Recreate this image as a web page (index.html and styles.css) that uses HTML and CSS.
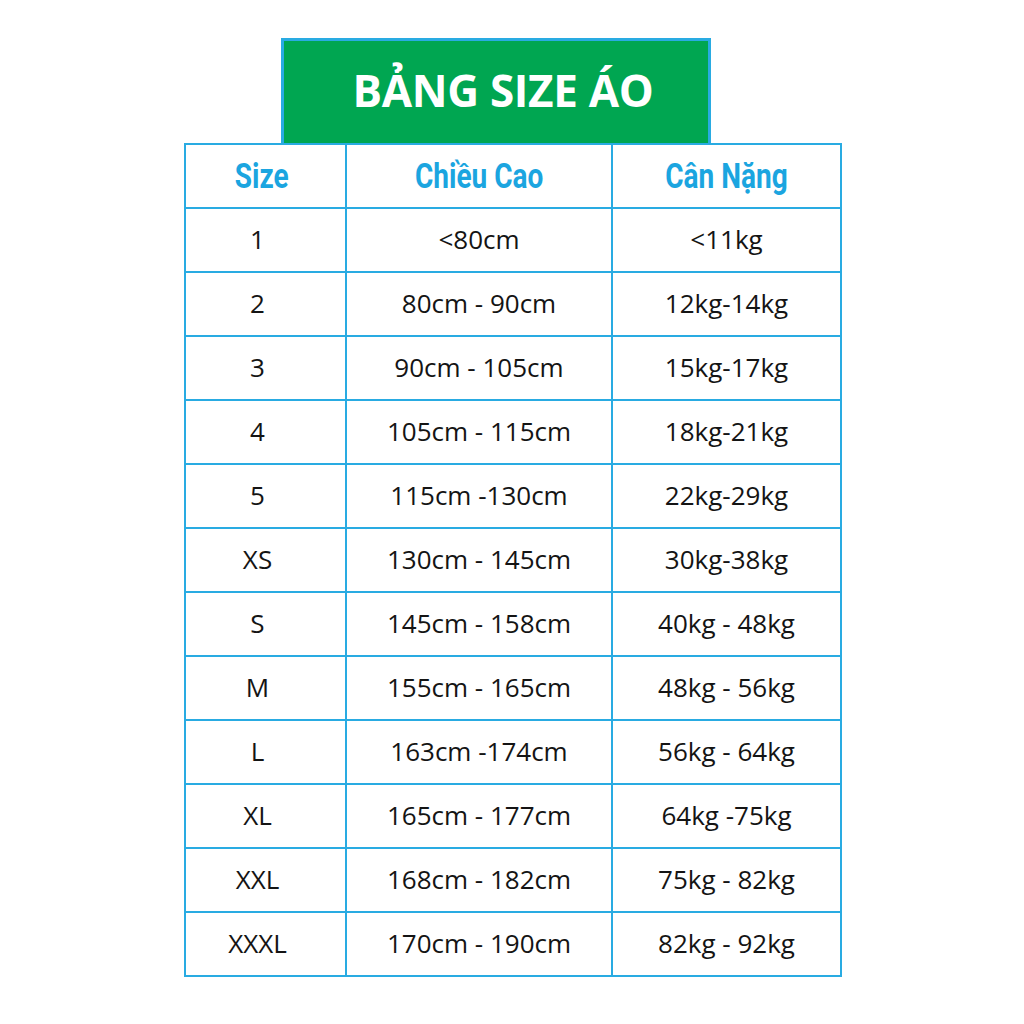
FILE: index.html
```html
<!DOCTYPE html>
<html lang="vi">
<head>
<meta charset="utf-8">
<link rel="stylesheet" href="styles.css">
</head>
<body>
<div class="page">
  <div class="title"><span>BẢNG SIZE ÁO</span></div>
  <table class="size-table">
    <colgroup><col class="c1"><col class="c2"><col class="c3"></colgroup>
    <thead>
      <tr><th><span>Size</span></th><th><span>Chiều Cao</span></th><th><span>Cân Nặng</span></th></tr>
    </thead>
    <tbody>
      <tr><td>1</td><td>&lt;80cm</td><td>&lt;11kg</td></tr>
      <tr><td>2</td><td>80cm - 90cm</td><td>12kg-14kg</td></tr>
      <tr><td>3</td><td>90cm - 105cm</td><td>15kg-17kg</td></tr>
      <tr><td>4</td><td>105cm - 115cm</td><td>18kg-21kg</td></tr>
      <tr><td>5</td><td>115cm -130cm</td><td>22kg-29kg</td></tr>
      <tr><td>XS</td><td>130cm - 145cm</td><td>30kg-38kg</td></tr>
      <tr><td>S</td><td>145cm - 158cm</td><td>40kg - 48kg</td></tr>
      <tr><td>M</td><td>155cm - 165cm</td><td>48kg - 56kg</td></tr>
      <tr><td>L</td><td>163cm -174cm</td><td>56kg - 64kg</td></tr>
      <tr><td>XL</td><td>165cm - 177cm</td><td>64kg -75kg</td></tr>
      <tr><td>XXL</td><td>168cm - 182cm</td><td>75kg - 82kg</td></tr>
      <tr><td>XXXL</td><td>170cm - 190cm</td><td>82kg - 92kg</td></tr>
    </tbody>
  </table>
</div>
</body>
</html>
```
FILE: styles.css
```css
html, body {
  margin: 0;
  padding: 0;
  background: #ffffff;
}
.page {
  padding-top: 38px;
  display: flex;
  flex-direction: column;
}
.title {
  margin-left: 281px;
  width: 424px;
  height: 102px;
  background: #00a651;
  border: 3px solid #29abe2;
  border-bottom: none;
  display: flex;
  align-items: center;
  justify-content: center;
  box-sizing: content-box;
}
.title span {
  font-family: "Open Sans", sans-serif;
  font-weight: 700;
  font-size: 44px;
  color: #ffffff;
  letter-spacing: -0.3px;
  padding-left: 14px;
  padding-bottom: 4px;
}
.size-table {
  margin-left: 184px;
  border-collapse: collapse;
  table-layout: fixed;
  width: 656px;
}
.c1 { width: 161px; }
.c2 { width: 266px; }
.c3 { width: 229px; }
.size-table th,
.size-table td {
  border: 2px solid #29abe2;
  height: 62px;
  padding: 0;
  text-align: center;
  vertical-align: middle;
}
.size-table th span {
  display: inline-block;
  font-family: Roboto, sans-serif;
  font-weight: 700;
  font-size: 35px;
  color: #1ba5e0;
  transform: scaleX(0.8);
  white-space: nowrap;
}
.size-table th:first-child {
  padding-right: 8px;
}
.size-table td {
  font-family: "Open Sans", sans-serif;
  font-size: 26px;
  color: #141414;
  height: 60px;
  padding-bottom: 2px;
}
.size-table td:first-child {
  padding-right: 16px;
}
```
